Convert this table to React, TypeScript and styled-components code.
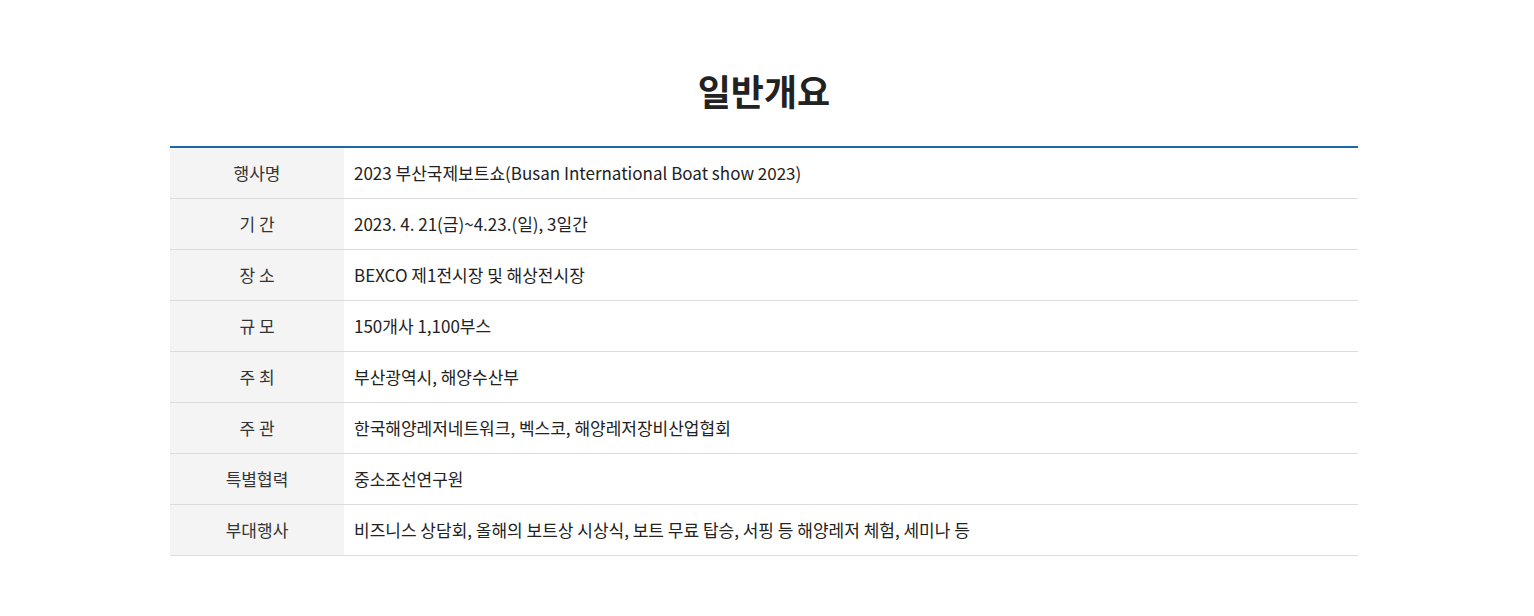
import React from 'react'
import styled, { createGlobalStyle } from 'styled-components'

const GlobalStyle = createGlobalStyle`
  body {
    margin: 0;
    background: #fff;
    font-family: "Noto Sans CJK KR", "Noto Sans", sans-serif;
    color: #333;
  }
`

const Page = styled.div`
  padding: 60px 6px 60px 0;
`

const Section = styled.section`
  width: 1188px;
  margin: 0 auto;
`

const Title = styled.h2`
  margin: 0 0 26px;
  text-align: center;
  font-size: 36px;
  font-weight: 700;
  line-height: 60px;
  color: #222;
`

const Table = styled.table`
  width: 100%;
  border-collapse: collapse;
  border-top: 2px solid #1b6aa5;
`

const Row = styled.tr`
  border-bottom: 1px solid #dcdcdc;
`

const Label = styled.th`
  width: 174px;
  height: 48px;
  padding: 0 0 2px;
  background: #f4f4f4;
  font-size: 17px;
  font-weight: 400;
  text-align: center;
  color: #333;
`

const Value = styled.td`
  height: 48px;
  padding: 0 10px 2px;
  font-size: 17px;
  color: #222;
`

const rows: [string, string][] = [
  ['행사명', '2023 부산국제보트쇼(Busan International Boat show 2023)'],
  ['기 간', '2023. 4. 21(금)~4.23.(일), 3일간'],
  ['장 소', 'BEXCO 제1전시장 및 해상전시장'],
  ['규 모', '150개사 1,100부스'],
  ['주 최', '부산광역시, 해양수산부'],
  ['주 관', '한국해양레저네트워크, 벡스코, 해양레저장비산업협회'],
  ['특별협력', '중소조선연구원'],
  ['부대행사', '비즈니스 상담회, 올해의 보트상 시상식, 보트 무료 탑승, 서핑 등 해양레저 체험, 세미나 등'],
]

export default function App() {
  return (
    <Page>
      <GlobalStyle />
      <Section>
        <Title>일반개요</Title>
        <Table>
          <tbody>
            {rows.map(([k, v]) => (
              <Row key={k}>
                <Label>{k}</Label>
                <Value>{v}</Value>
              </Row>
            ))}
          </tbody>
        </Table>
      </Section>
    </Page>
  )
}
